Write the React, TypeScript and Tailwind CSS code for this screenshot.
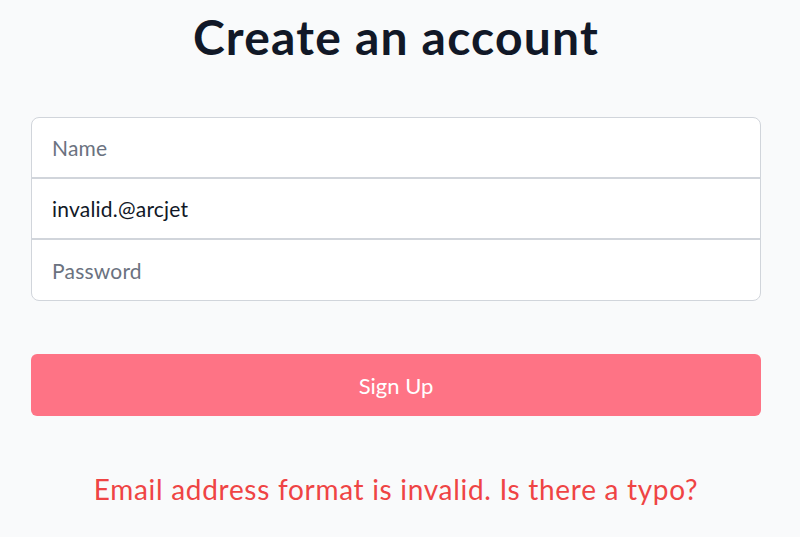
export default function App() {
  return (
    <div
      className="min-h-[537px] w-full bg-gray-50"
      style={{ fontFamily: "Lato, 'Noto Sans', sans-serif" }}
    >
      <div className="ml-[31px] w-[730px] pt-[5px]">
        <h1 className="text-center text-[48px] leading-[64px] font-bold tracking-wide text-[#111827]">
          Create an account
        </h1>

        <form className="mt-[48px]" onSubmit={(e) => e.preventDefault()}>
          <div className="overflow-hidden rounded-lg border border-[#d1d5db] bg-white divide-y-2 divide-[#d1d5db]">
            <input
              type="text"
              placeholder="Name"
              className="block h-[61px] w-full px-5 text-[21px] tracking-[0.01em] text-[#111827] placeholder:text-[#6b7280] outline-none"
            />
            <input
              type="email"
              defaultValue="invalid.@arcjet"
              className="block h-[61px] w-full px-5 text-[21px] tracking-[0.01em] text-[#111827] outline-none"
            />
            <input
              type="password"
              placeholder="Password"
              className="block h-[60px] w-full px-5 text-[21px] tracking-[0.01em] text-[#111827] placeholder:text-[#6b7280] outline-none"
            />
          </div>

          <button
            type="submit"
            className="mt-[53px] flex h-[62px] w-full items-center justify-center rounded-md bg-[#fe7385] text-[22px] text-white"
          >
            Sign Up
          </button>
        </form>

        <p className="mt-[52px] text-center text-[28px] tracking-wide text-[#ef4444]">
          Email address format is invalid. Is there a typo?
        </p>
      </div>
    </div>
  );
}
